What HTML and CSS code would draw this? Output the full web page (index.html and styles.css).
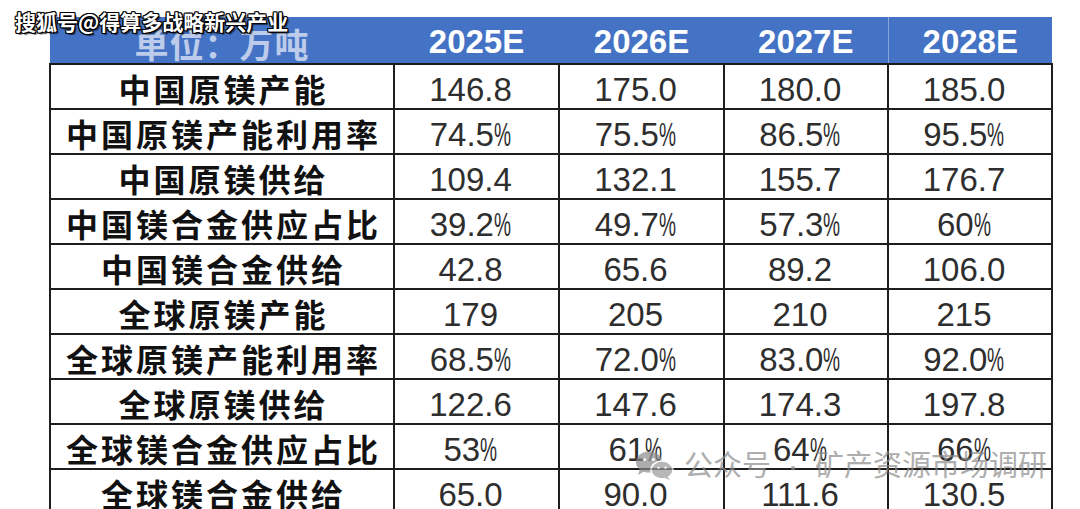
FILE: index.html
```html
<!DOCTYPE html>
<html lang="zh">
<head>
<meta charset="utf-8">
<link rel="stylesheet" href="styles.css">
</head>
<body>
<div class="page">
  <table class="grid">
    <colgroup>
      <col class="c-label"><col class="c-y"><col class="c-y"><col class="c-y3"><col class="c-y4">
    </colgroup>
    <thead>
      <tr>
        <th class="unit">单位：万吨</th>
        <th>2025E</th>
        <th>2026E</th>
        <th class="sep">2027E</th>
        <th>2028E</th>
      </tr>
    </thead>
    <tbody>
      <tr><td class="lbl">中国原镁产能</td><td>146.8</td><td>175.0</td><td>180.0</td><td>185.0</td></tr>
      <tr><td class="lbl">中国原镁产能利用率</td><td>74.5<span class="pct">%</span></td><td>75.5<span class="pct">%</span></td><td>86.5<span class="pct">%</span></td><td>95.5<span class="pct">%</span></td></tr>
      <tr><td class="lbl">中国原镁供给</td><td>109.4</td><td>132.1</td><td>155.7</td><td>176.7</td></tr>
      <tr><td class="lbl">中国镁合金供应占比</td><td>39.2<span class="pct">%</span></td><td>49.7<span class="pct">%</span></td><td>57.3<span class="pct">%</span></td><td>60<span class="pct">%</span></td></tr>
      <tr><td class="lbl">中国镁合金供给</td><td>42.8</td><td>65.6</td><td>89.2</td><td>106.0</td></tr>
      <tr><td class="lbl">全球原镁产能</td><td>179</td><td>205</td><td>210</td><td>215</td></tr>
      <tr><td class="lbl">全球原镁产能利用率</td><td>68.5<span class="pct">%</span></td><td>72.0<span class="pct">%</span></td><td>83.0<span class="pct">%</span></td><td>92.0<span class="pct">%</span></td></tr>
      <tr><td class="lbl">全球原镁供给</td><td>122.6</td><td>147.6</td><td>174.3</td><td>197.8</td></tr>
      <tr><td class="lbl">全球镁合金供应占比</td><td>53<span class="pct">%</span></td><td>61<span class="pct">%</span></td><td>64<span class="pct">%</span></td><td>66<span class="pct">%</span></td></tr>
      <tr><td class="lbl">全球镁合金供给</td><td>65.0</td><td>90.0</td><td>111.6</td><td>130.5</td></tr>
    </tbody>
  </table>

  <div class="wm-top">搜狐号@得算多战略新兴产业</div>

  <div class="wm-bottom">
    <svg class="wx" viewBox="0 0 40 30" width="40" height="30" aria-hidden="true">
      <ellipse cx="15" cy="11" rx="13" ry="10.5" fill="#8a8a8a"/>
      <path d="M6 18 L4 24 L11 20 Z" fill="#8a8a8a"/>
      <ellipse cx="28" cy="19" rx="11" ry="9" fill="#9a9a9a" stroke="#fff" stroke-width="1.5"/>
      <path d="M33 25 L36 29 L30 26.5 Z" fill="#9a9a9a"/>
      <circle cx="10.5" cy="8.5" r="1.6" fill="#fff"/>
      <circle cx="19.5" cy="8.5" r="1.6" fill="#fff"/>
      <circle cx="24.5" cy="17" r="1.3" fill="#fff"/>
      <circle cx="31.5" cy="17" r="1.3" fill="#fff"/>
    </svg>
    <span class="wm-text">公众号<span class="dot">·</span>矿产资源市场调研</span>
  </div>
</div>
</body>
</html>
```

FILE: styles.css
```css
html, body {
  margin: 0;
  padding: 0;
  background: #ffffff;
  overflow: hidden;
}

.page {
  position: relative;
  width: 1080px;
  height: 509px;
  overflow: hidden;
  padding: 17px 0 0 49px;
  box-sizing: border-box;
}

.grid {
  border-collapse: collapse;
  table-layout: fixed;
  width: 1002px;
}

.c-label { width: 344px; }
.c-y { width: 165px; }
.c-y3 { width: 164px; }
.c-y4 { width: 164px; }

.grid th {
  background: #4472c4;
  color: #ffffff;
  height: 45px;
  padding: 2px 0 0;
  font-family: "Liberation Sans", Arial, sans-serif;
  font-weight: bold;
  font-size: 33px;
  line-height: 1;
  text-align: center;
  vertical-align: middle;
  border: none;
  border-bottom: 2px solid #1c1c1c;
  box-sizing: border-box;
}

.grid th.sep {
  border-right: 1px solid #8aa6d8;
}

.grid th.unit {
  font-family: "Noto Sans CJK SC", sans-serif;
  font-weight: bold;
  font-size: 34px;
  letter-spacing: 1px;
  color: rgba(235, 240, 250, 0.72);
  padding-top: 8px;
  vertical-align: bottom;
  line-height: 38px;
  overflow: hidden;
}

.grid td {
  height: 45px;
  padding: 6px 12px 0 0;
  box-sizing: border-box;
  border: 2px solid #1e1e1e;
  text-align: center;
  vertical-align: middle;
  font-family: "Liberation Sans", Arial, sans-serif;
  font-size: 33px;
  line-height: 1;
  color: #2e2e2e;
  white-space: nowrap;
}

.grid td.lbl {
  font-family: "Noto Sans CJK SC", sans-serif;
  font-weight: bold;
  font-size: 32px;
  letter-spacing: 3px;
  color: #111111;
  padding: 2px 0 0 3px;
}

.pct {
  display: inline-block;
  transform: scaleX(0.58);
  transform-origin: left center;
  margin-right: -12px;
}

.wm-top {
  position: absolute;
  left: 15px;
  top: 7px;
  font-family: "Noto Sans CJK SC", sans-serif;
  font-weight: bold;
  font-size: 21px;
  line-height: 28px;
  color: #ffffff;
  text-shadow:
    1px 1px 0 #000, -1px -1px 0 #000, 1px -1px 0 #000, -1px 1px 0 #000,
    1px 0 0 #000, -1px 0 0 #000, 0 1px 0 #000, 0 -1px 0 #000,
    2px 2px 1px rgba(0,0,0,0.6);
}

.wm-bottom {
  position: absolute;
  left: 634px;
  top: 446px;
  display: flex;
  align-items: center;
  gap: 10px;
  opacity: 0.7;
}

.wx {
  display: block;
}

.wm-text {
  font-family: "Noto Sans CJK SC", sans-serif;
  font-size: 29px;
  line-height: 34px;
  color: #8c8c8c;
}

.dot {
  display: inline-block;
  width: 44px;
  text-align: center;
  font-size: 20px;
}
```
